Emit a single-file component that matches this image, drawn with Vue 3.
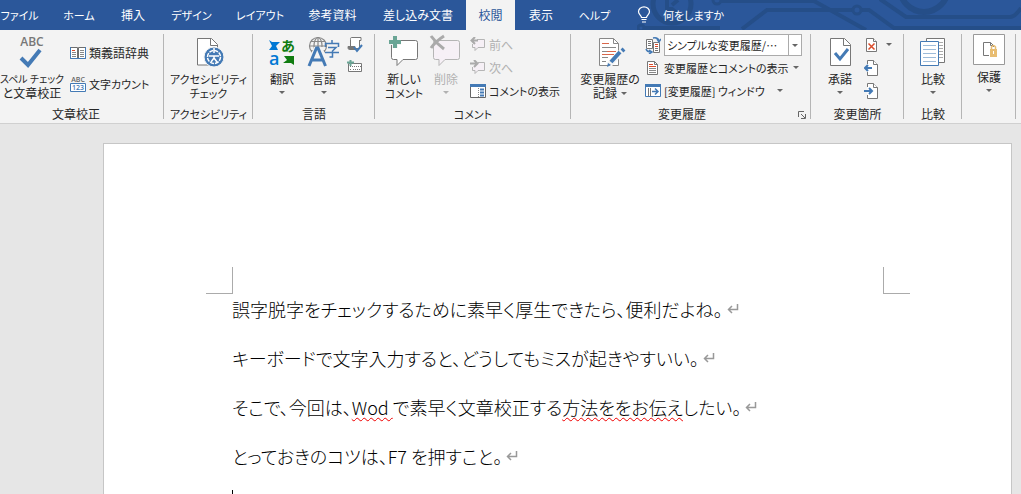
<script setup>
const tabs = ['ファイル', 'ホーム', '挿入', 'デザイン', 'レイアウト', '参考資料', '差し込み文書', '校閲', '表示', 'ヘルプ']
const active = '校閲'
const lines = [
  [{ t: '誤字脱字をチェックするために素早く厚生できたら、便利だよね。' }],
  [{ t: 'キーボードで文字入力すると、どうしてもミスが起きやすいい。' }],
  [
    { t: 'そこで、今回は、' },
    { t: 'Wod ', bad: true },
    { t: 'で素早く文章校正する' },
    { t: '方法ををお伝え', bad: true },
    { t: 'したい。' },
  ],
  [{ t: 'とっておきのコツは、F7 を押すこと。' }],
]
const isKana = (t) => /^[ァ-ー]+$/.test(t)
</script>

<template>
  <div class="app">
    <header class="bar">
      <svg class="circuit" width="384" height="30" viewBox="637 0 384 30" fill="none" stroke="#254e88" stroke-width="4">
        <circle cx="672" cy="4" r="19" stroke-width="5" />
        <path d="M667 0v9h5l6 5M678 0l-6 5" />
        <circle cx="641" cy="28" r="3" stroke-width="3" /><path d="M645 28h75" />
        <circle cx="717" cy="0" r="4" stroke-width="3" /><path d="M721 1h93l52 29" />
        <path d="M742 29l25-19h86M861 10h8l25 18h127" /><circle cx="857" cy="10" r="4" stroke-width="3" />
        <path d="M880-1l26 18h104q5 0 11-9" />
        <circle cx="924" cy="-12" r="24" stroke-width="6" />
      </svg>
      <nav class="tabs">
        <button v-for="t in tabs" :key="t" class="tab" :class="{ on: t === active, kana: isKana(t) }">{{ t }}</button>
      </nav>
      <button class="tell kana">
        <svg width="14" height="18" viewBox="0 0 14 18" fill="none" stroke="#fff" stroke-width="1.2"><path d="M4.500 11.500C4.500 9.500 1.500 8.500 1.500 5.800a5.500 5 0 0 1 11 0c0 2.700-3 3.700-3 5.700zM4.500 13.500h5M5 16h4" /></svg>
        何をしますか
      </button>
    </header>

    <div class="ribbon">
      <section class="group proof">
        <div class="body">
          <button class="big spell">
            <svg width="36" height="36" viewBox="0 0 36 36"><text x="18" y="12" text-anchor="middle" font-family="Open Sans, sans-serif" font-size="12" font-weight="600" fill="#777">ABC</text><path d="M7 24l7 7L26 16" fill="none" stroke="#447ab5" stroke-width="4" /></svg>
            <span class="small">スペル チェック</span>
            <span>と文章校正</span>
          </button>
          <div class="rows two">
            <button class="row">
              <svg width="16" height="16" viewBox="0 0 16 16" fill="#fff" stroke="#447ab5"><path d="M.5 2.500h7v11h-7zM8.500 2.500h7v11h-7z" stroke="#6e6e6e" /><path d="M.5 2v11.500h15V2" fill="none" /><path d="M2 5.500h3" stroke="#db4b2a" /><path d="M2 7.500h4M2 9.500h4M2 11.500h4M10 5.500h4M10 7.500h4M10 9.500h4M10 11.500h4" stroke="#888" /></svg>
              類義語辞典
            </button>
            <button class="row kana">
              <svg width="16" height="16" viewBox="0 0 16 16" font-family="Open Sans, sans-serif" font-weight="600" text-anchor="middle"><text x="8" y="6" font-size="7" fill="#666">ABC</text><path d="M.5 7.500h15v8H.5z" fill="#fff" stroke="#447ab5" /><text x="8" y="14" font-size="7" fill="#447ab5">123</text></svg>
              文字カウント
            </button>
          </div>
        </div>
        <h2>文章校正</h2>
      </section>

      <section class="group">
        <div class="body mid">
          <button class="big kana">
            <svg width="36" height="36" viewBox="0 0 36 36"><path d="M6.500 4.500h14l6 6v20.500h-20z" fill="#fff" stroke="#777" /><path d="M19.500 4.500v7h7" fill="none" stroke="#777" /><circle cx="23" cy="23" r="10" fill="#447ab5" stroke="#f3f3f3" /><circle cx="23" cy="23" r="6.500" fill="none" stroke="#fff" stroke-width="1.500" stroke-dasharray="4 1" /><path d="M23 14v5m-5 3h10m-5 0v2l-3 4m3-4l3 4" fill="none" stroke="#fff" stroke-width="1.500" /></svg>
            <span>アクセシビリティ</span>
            <span>チェック</span>
          </button>
        </div>
        <h2 class="kana">アクセシビリティ</h2>
      </section>

      <section class="group">
        <div class="body lang">
          <button class="big narrow">
            <svg width="36" height="36" viewBox="0 0 36 36" font-family="Noto Sans CJK JP, sans-serif" font-weight="700"><text x="17" y="17" font-size="14" fill="#107c10">あ</text><text x="5" y="31" font-size="18" font-family="Open Sans, sans-serif" font-weight="600" fill="#0078d4">a</text><path d="M5 6l3 2h8l-4 4 2 4H5l3-4z" fill="#0078d4" /><path d="M20 22h10v9l-3-2h-8l4-3z" fill="#107c10" /></svg>
            <span>翻訳</span><i class="caret"></i>
          </button>
          <button class="big narrow">
            <svg width="36" height="36" viewBox="0 0 36 36"><g fill="none" stroke="#888" stroke-width="1.200"><circle cx="12" cy="12" r="8.500" /><ellipse cx="12" cy="12" rx="4" ry="8.500" /><path d="M12 3.500v17M3.500 12h17M5 7.500h14M5 16.500h14" /></g><path d="M0 32l8-19h9l4 19z" fill="#f3f3f3" /><path d="M3 32l7.500-18h1.500l7.500 18M6 26h10.500" fill="none" stroke="#447ab5" stroke-width="3" /><path d="M26 6v3M19.500 13V9.500h13V13M22 13.500h8l-3.500 3.500v6h-3M19 18.500h14" fill="none" stroke="#447ab5" stroke-width="1.500" /></svg>
            <span>言語</span><i class="caret"></i>
          </button>
          <div class="rows">
            <button class="row" aria-label="言語の校正">
              <svg width="16" height="18" viewBox="0 0 16 18" fill="#fff" stroke="#777"><path d="M4.500 1.500h8v11h-9v-9c0-1 0-2 1-2z" /><path d="M1 10.500h7v3H2.500C1 13.500 1 12 1 10.500z" fill="#777" /><path d="M12 1.500h2v3h-2" /><path d="M7 11l3 4 5-6" fill="none" stroke="#447ab5" stroke-width="2" /></svg>
            </button>
            <button class="row" aria-label="入力方式">
              <svg width="16" height="16" viewBox="0 0 16 16" fill="none" stroke="#777"><path d="M1.500 3.500h13v8h-13z" fill="#fff" /><path d="M3 6.500h11M3 9.500h2m1 0h5m1 0h2" stroke-dasharray="1 1" /><path d="M0 2.500h7M3.500 0v6" stroke="#6aa595" stroke-width="2" /></svg>
            </button>
          </div>
        </div>
        <h2>言語</h2>
      </section>

      <section class="group">
        <div class="body notes">
          <button class="big narrow">
            <svg width="36" height="36" viewBox="0 0 36 36"><path d="M7.500 6.500h22q2 0 2 2v15q0 2-2 2H17l-6 6v-6H7.500q-2 0-2-2v-15q0-2 2-2z" fill="#fff" stroke="#777" /><path d="M3 8h12M9 2v12" stroke="#f3f3f3" stroke-width="6" /><path d="M3 8h12M9 2v12" stroke="#6aa595" stroke-width="4" /></svg>
            <span>新しい</span>
            <span class="kana">コメント</span>
          </button>
          <button class="big narrow" disabled>
            <svg width="36" height="36" viewBox="0 0 36 36"><path d="M7.500 6.500h22q2 0 2 2v15q0 2-2 2H17l-6 6v-6H7.500q-2 0-2-2v-15q0-2 2-2z" fill="#f6f0f6" stroke="#b5b5b5" /><path d="M3 2q5 7 13 13M16 2Q8 7 3 14" fill="none" stroke="#aaa" stroke-width="3" /></svg>
            <span>削除</span><i class="caret"></i>
          </button>
          <div class="rows">
            <button class="row" disabled>
              <svg width="16" height="16" viewBox="0 0 16 16"><path d="M7 2.500h7.500v8H8l-3 3v-3H2.500V7" fill="#f6f0f6" stroke="#b5b5b5" /><path d="M8 3.500H2M5 0L1.500 3.500 5 7" fill="none" stroke="#aaa" stroke-width="2" /></svg>
              前へ
            </button>
            <button class="row" disabled>
              <svg width="16" height="16" viewBox="0 0 16 16"><path d="M8 2.500h6.500v8H8l-3 3v-3H2.500V7" fill="#f6f0f6" stroke="#b5b5b5" /><path d="M0 3.500h6M4 0l3.500 3.500L4 7" fill="none" stroke="#aaa" stroke-width="2" /></svg>
              次へ
            </button>
            <button class="row kana">
              <svg width="16" height="16" viewBox="0 0 16 16"><path d="M.5 1.500h15v13H.5z" fill="#fff" stroke="#666" /><path d="M0 1h16v3H0z" fill="#447ab5" /><path d="M8.500 5v9" stroke="#888" stroke-dasharray="1 1" /><path d="M10 6.500h4M10 9.500h4M10 12.500h4" stroke="#447ab5" stroke-width="2" /></svg>
              コメントの表示
            </button>
          </div>
        </div>
        <h2 class="kana">コメント</h2>
      </section>

      <section class="group history">
        <div class="body track">
          <button class="big">
            <svg width="36" height="36" viewBox="0 0 36 36"><path d="M7.500 4.500h14l5 5v22h-19z" fill="#fff" stroke="#888" /><path d="M21.500 4.500v5h5" fill="none" stroke="#888" /><path d="M10 13.500h14M10 17.500h5M10 23.500h6M10 27.500h4" stroke="#888" /><path d="M10 9.500h7M15 17.500h9M10 20.500h12" stroke="#d9674b" /><path d="M17 31l15-16" stroke="#f3f3f3" stroke-width="6" /><path d="M19 28l9-10M30 17l2-2" stroke="#447ab5" stroke-width="4" /><path d="M15 33l1-4 3 2z" fill="#447ab5" /></svg>
            <span>変更履歴の</span>
            <span class="inline">記録<i class="caret"></i></span>
          </button>
          <div class="rows">
            <div class="row">
              <svg width="16" height="18" viewBox="0 0 16 18" fill="#fff" stroke="#777"><path d="M1.500 3.500h6v9h-6zM8.500 6.500h6v10h-6z" /><path d="M3 5.500h3M3 7.500h3M3 9.500h3M10 12.500h3M10 14.500h3" /><path d="M10 8.500h3M10 10.500h3" stroke="#db4b2a" /><path d="M8 2q5-1 6 3M12 3l2 3 2-3M1 13q1 3 5 3M4 14l3 2-3 2" fill="none" stroke="#447ab5" stroke-width="1.500" /></svg>
              <span class="combo kana">
                <select aria-label="変更内容の表示"><option>シンプルな変更履歴/…</option></select>
                <i class="caret"></i>
              </span>
            </div>
            <button class="row kana">
              <svg width="16" height="16" viewBox="0 0 16 16"><path d="M2.500 1.500h7l3 3v10h-10z" fill="#fff" stroke="#777" /><path d="M9.500 1.500v3h3" fill="none" stroke="#777" /><path d="M4 4.500h4M4 6.500h7" stroke="#db4b2a" /><path d="M4 8.500h7M4 10.500h7M4 12.500h7" stroke="#888" /></svg>
              変更履歴とコメントの表示<i class="caret"></i>
            </button>
            <button class="row kana">
              <svg width="16" height="16" viewBox="0 0 16 16"><path d="M.5 1.500h15v12H.5z" fill="#fff" stroke="#447ab5" /><path d="M0 1h16v3H0z" fill="#447ab5" /><path d="M3.500 5v8M5.500 5v8" stroke="#777" /><path d="M7 8.500h6M10 5.500l3 3-3 3" fill="none" stroke="#447ab5" stroke-width="1.500" /></svg>
              [変更履歴] ウィンドウ<i class="caret far"></i>
            </button>
          </div>
        </div>
        <h2>変更履歴</h2>
        <button class="launch" aria-label="変更履歴オプション"><svg width="8" height="8" viewBox="0 0 8 8" fill="none" stroke="#666"><path d="M.5 6V.5H6M3 3l4 4M7.500 3v4.500H3" /></svg></button>
      </section>

      <section class="group">
        <div class="body changes">
          <button class="big narrow">
            <svg width="36" height="36" viewBox="0 0 36 36"><path d="M8.500 4.500h14l6 6v21h-20z" fill="#fff" stroke="#777" /><path d="M21.500 4.500v7h7" fill="none" stroke="#777" /><path d="M13 19l5 6 8-10" fill="none" stroke="#447ab5" stroke-width="3" /></svg>
            <span>承諾</span><i class="caret"></i>
          </button>
          <div class="rows">
            <button class="row" aria-label="元に戻す">
              <svg width="16" height="16" viewBox="0 0 16 16" fill="#fff" stroke="#777"><path d="M2.500 1.500h7l3 3v10h-10z" /><path d="M9.500 1.500v3h3" /><path d="M4.500 6.500l6 6m0-6l-6 6" stroke="#db4b2a" stroke-width="1.500" /></svg>
              <i class="caret"></i>
            </button>
            <button class="row" aria-label="前の変更箇所">
              <svg width="16" height="16" viewBox="0 0 16 16" fill="#fff" stroke="#777"><path d="M3.500 4V.5h6l4 4v11h-10V12" /><path d="M9.500.5v4h4" /><path d="M8 8H1M4 5L1 8l3 3" fill="none" stroke="#447ab5" stroke-width="2" /></svg>
            </button>
            <button class="row" aria-label="次の変更箇所">
              <svg width="16" height="16" viewBox="0 0 16 16" fill="#fff" stroke="#777"><path d="M3.500 4V.5h6l4 4v11h-10V12" /><path d="M9.500.5v4h4" /><path d="M0 8h8M5 5l3 3-3 3" fill="none" stroke="#447ab5" stroke-width="2" /></svg>
            </button>
          </div>
        </div>
        <h2>変更箇所</h2>
      </section>

      <section class="group">
        <div class="body mid">
          <button class="big narrow">
            <svg width="36" height="36" viewBox="0 0 36 36" fill="#fff"><path d="M11.500 4.500h18v24h-18z" stroke="#777" /><path d="M24 8.500h4M24 11.500h4M24 14.500h4M24 17.500h4M24 20.500h4M24 23.500h4" stroke="#aaa" /><path d="M5.500 7.500h18v24h-18z" stroke="#447ab5" /><path d="M8 11.500h13M8 15.500h13M8 19.500h13M8 23.500h13M8 27.500h13" stroke="#9dbbd9" /></svg>
            <span>比較</span><i class="caret"></i>
          </button>
        </div>
        <h2>比較</h2>
      </section>

      <section class="group">
        <div class="body mid">
          <button class="big narrow protect">
            <svg width="32" height="31" viewBox="0 0 32 31"><path d="M.5.5h31v30H.5z" fill="#fff" stroke="#999" /><path d="M16 21.500h-5.500v-13h7l3 3V13M17.500 8.500v3h3" fill="none" stroke="#777" /><path d="M17 15h7v8h-7z" fill="#e8bd72" /><path d="M18.500 15v-2q2-3 4 0v2" fill="none" stroke="#e8bd72" stroke-width="1.500" /><path d="M20.500 17v3" stroke="#fff" /></svg>
            <span>保護</span><i class="caret"></i>
          </button>
        </div>
      </section>
    </div>

    <main class="desk">
      <article class="page">
        <div class="marks"><i class="mark left"></i><i class="mark right"></i></div>
        <div class="text" contenteditable="true" spellcheck="false">
          <p v-for="(line, i) in lines" :key="i"><span v-for="(r, j) in line" :key="j" :class="{ bad: r.bad }">{{ r.t }}</span><svg class="ret" width="12" height="12" viewBox="0 0 12 12" fill="none" stroke="#999" stroke-width="1.500"><path d="M10.500 1v5.500H1.500M5 3L1.500 6.500 5 10" /></svg></p>
          <p class="cursor"></p>
        </div>
      </article>
    </main>
  </div>
</template>

<style>
body { margin: 0; background: #e6e6e6; }
</style>

<style scoped>
.app { height: 100vh; overflow: hidden; display: flex; flex-direction: column; font: 12px/14px "Noto Sans CJK JP", sans-serif; font-feature-settings: "palt"; color: #262626; }
button { font: inherit; font-feature-settings: inherit; color: inherit; background: none; border: 0; padding: 0; white-space: nowrap; }
svg { display: block; flex: none; }
.bar { position: relative; flex: none; height: 30px; display: flex; background: #2b579a; color: #fff; }
.circuit { position: absolute; right: 0; top: 0; }
.tabs { display: grid; grid-template-columns: 61px 58px 50px 67px 70px 75px 96px 49px 52px 55px; margin-left: -11px; }
.tab.on { background: #f3f3f3; color: #2b579a; }
.tell { position: relative; display: flex; align-items: center; gap: 12px; margin-left: 15px; }
.ribbon { flex: none; height: 93px; display: grid; grid-template-columns: 164fr 89fr 122fr 196fr 240fr 93fr 58fr 54fr 5fr; background: #f3f3f3; border-bottom: 1px solid #d0d0d0; }
.group { position: relative; min-width: 0; display: flex; flex-direction: column; padding-top: 4px; }
.group::after { content: ""; position: absolute; right: 0; top: 4px; bottom: 4px; width: 1px; background: #b5b5b5; }
.body { flex: none; height: 73px; display: flex; }
.mid { justify-content: center; }
h2 { margin: 0; font: inherit; text-align: center; white-space: nowrap; }
.proof h2 { padding-right: 12px; }
.history h2 { padding-right: 18px; }
.kana, button.kana { font-size: 11px; }
.small { font-size: 10px; }
.big { width: 72px; flex: none; display: flex; flex-direction: column; align-items: center; }
.big svg { margin-bottom: 2px; }
.big.narrow { width: 42px; }
.big.spell { width: 64px; }
.big.protect svg { margin-bottom: 5px; }
.caret { display: inline-block; border: 3px solid transparent; border-top-color: #666; border-bottom: 0; flex: none; }
.big > .caret { margin-top: 5px; }
.inline { display: flex; align-items: center; gap: 4px; }
.rows { display: flex; flex-direction: column; margin-top: -1px; }
.row { display: flex; align-items: center; height: 23px; gap: 3px; }
.rows.two { gap: 8px; padding-top: 8px; margin-left: 6px; }
.lang { padding-left: 8px; }
.lang .rows { margin-left: 2px; }
.notes { padding-left: 8px; }
.notes .rows { margin-left: 3px; }
.track { padding-left: 3px; }
.track .rows { margin-left: -1px; }
.track .row .caret { margin-left: 1px; }
.track .row .far { margin-left: 9px; }
.changes { padding-left: 8px; }
.changes .rows { margin-left: 3px; }
.changes .row { gap: 6px; }
button:disabled { color: #b1b1b1; }
button:disabled .caret { border-top-color: #b1b1b1; }
.combo { position: relative; width: 138px; height: 22px; }
select { appearance: none; width: 100%; height: 100%; box-sizing: border-box; font: inherit; font-feature-settings: inherit; color: inherit; background: #fff; border: 1px solid #ababab; border-radius: 0; padding: 0 14px 0 2px; }
.combo .caret { position: absolute; right: 4px; top: 10px; }
.combo::after { content: ""; position: absolute; right: 13px; top: 0; bottom: 0; width: 1px; background: #ababab; }
.launch { position: absolute; right: 5px; bottom: 4px; }
.desk { flex: 1; min-height: 0; padding: 19px 9px 0 103px; }
.page { min-height: 600px; background: #fff; border: 1px solid #c6c6c6; padding-top: 123px; }
.marks { display: flex; justify-content: space-between; padding: 0 101px 0 102px; }
.mark { width: 26px; height: 26px; border-bottom: 1px solid #ababab; }
.left { border-right: 1px solid #ababab; }
.right { border-left: 1px solid #ababab; }
.text { padding: 0 101px 0 128px; font-size: 18px; font-weight: 300; line-height: 30px; color: #000; outline: 0; }
.text p { margin: 0 0 19px; display: flex; align-items: center; white-space: pre; }
.ret { margin-left: 4px; }
.bad { text-decoration: underline wavy #e00 1px; text-underline-offset: 2px; }
.text .cursor { width: 1px; height: 20px; background: #000; }
</style>
